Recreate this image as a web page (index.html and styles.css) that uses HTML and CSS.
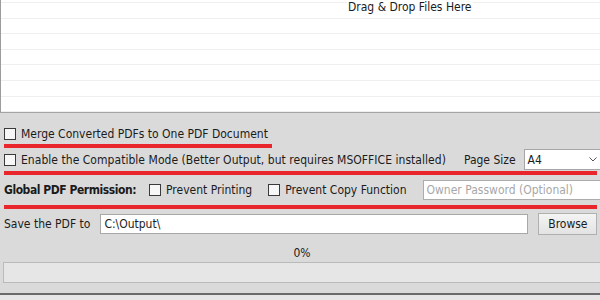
FILE: index.html
```html
<!DOCTYPE html>
<html>
<head>
<meta charset="utf-8">
<link rel="stylesheet" href="styles.css">
</head>
<body>
<div class="app">
  <div class="list">
    <div class="caption">Drag &amp; Drop Files Here</div>
  </div>

  <div class="row row1">
    <span class="cb"></span><span class="lbl">Merge Converted PDFs to One PDF Document</span>
  </div>
  <div class="red red-short"></div>

  <div class="row row2">
    <span class="cb"></span><span class="lbl wide">Enable the Compatible Mode (Better Output, but requires MSOFFICE installed)</span>
    <span class="lbl pagesize">Page Size</span>
    <div class="select"><span>A4</span>
      <svg class="chev" width="8" height="5" viewBox="0 0 8 5"><path d="M0.5 0.5 L4 4 L7.5 0.5" fill="none" stroke="#555" stroke-width="1"/></svg>
    </div>
  </div>
  <div class="red red-long"></div>

  <div class="row row3">
    <span class="lbl bold">Global PDF Permission:</span>
    <span class="cb cb-gap"></span><span class="lbl">Prevent Printing</span>
    <span class="cb cb-gap2"></span><span class="lbl">Prevent Copy Function</span>
    <div class="pwd">Owner Password (Optional)</div>
  </div>
  <div class="red red-long"></div>

  <div class="row row4">
    <span class="lbl">Save the PDF to</span>
    <div class="path">C:\Output\</div>
    <div class="btn">Browse</div>
  </div>

  <div class="pct">0%</div>
  <div class="progress"></div>
  <div class="bottom"></div>
</div>
</body>
</html>
```

FILE: styles.css
```css
html, body {
  margin: 0;
  padding: 0;
}
body {
  width: 600px;
  height: 300px;
  overflow: hidden;
  background: #dadada;
  font-family: "DejaVu Sans Condensed", "DejaVu Sans", sans-serif;
  font-size: 12px;
  color: #1b1b1b;
}
.app {
  display: flex;
  flex-direction: column;
  height: 300px;
}
.list {
  height: 112px;
  flex: none;
  border-left: 1px solid #9c9c9c;
  border-bottom: 1px solid #a4a4a4;
  background-color: #ffffff;
  background-image: repeating-linear-gradient(to bottom, #efefef 0, #efefef 1px, transparent 1px, transparent 15.6px);
  background-position: 0 2px;
  overflow: hidden;
}
.caption {
  margin-top: -9px;
  margin-left: 346px;
  line-height: 14px;
  background: #fff;
  display: inline-block;
  padding: 0 1px;
}
.row {
  display: flex;
  align-items: center;
  flex: none;
  padding-left: 4px;
}
.row1 { margin-top: 10px; height: 21px; }
.row2 { height: 23px; }
.row3 { height: 30px; }
.row4 { height: 29px; }
.cb {
  width: 10px;
  height: 10px;
  border: 1px solid #3a3a3a;
  background: #f7f7f7;
  flex: none;
  margin-right: 5px;
}
.cb-gap { margin-left: 13px; }
.cb-gap2 { margin-left: 16px; }
.lbl { white-space: nowrap; }
.wide { letter-spacing: 0.04px; }
.bold { font-weight: bold; letter-spacing: -0.45px; }
.red {
  height: 4px;
  background: #e8262b;
  flex: none;
  margin-left: 4px;
}
.red-short { width: 268px; }
.red-long { width: 593px; }
.pagesize { margin-left: 18px; }
.select {
  margin-left: 8px;
  flex: 1;
  height: 19px;
  border: 1px solid #a6a6a6;
  border-right: none;
  background: #fff;
  display: flex;
  align-items: center;
  padding-left: 3px;
  justify-content: space-between;
}
.chev { margin-right: 3px; }
.pwd {
  margin-left: 16px;
  flex: 1;
  height: 18px;
  border: 1px solid #acacac;
  border-right: none;
  background: #fff;
  color: #a7a7a7;
  display: flex;
  align-items: center;
  padding-left: 3px;
}
.path {
  margin-left: 10px;
  width: 423px;
  height: 18px;
  border: 1px solid #a8a8a8;
  background: #fff;
  display: flex;
  align-items: center;
  padding-left: 3px;
}
.btn {
  margin-left: 10px;
  width: 57px;
  height: 20px;
  border: 1px solid #b0b0b0;
  background: linear-gradient(#f4f4f4, #e3e3e3);
  display: flex;
  align-items: center;
  justify-content: center;
}
.pct {
  flex: none;
  height: 18px;
  margin-top: 6px;
  line-height: 18px;
  text-align: center;
  padding-left: 4px;
}
.progress {
  flex: none;
  margin-left: 3px;
  height: 19px;
  border: 1px solid #bababa;
  border-right: none;
  background: #e6e6e6;
}
.bottom {
  flex: none;
  margin-top: 10px;
  height: 2px;
  background: #6a6a6a;
}
.app::after {
  content: "";
  flex: 1;
  background: #e6e6e6;
}
```
